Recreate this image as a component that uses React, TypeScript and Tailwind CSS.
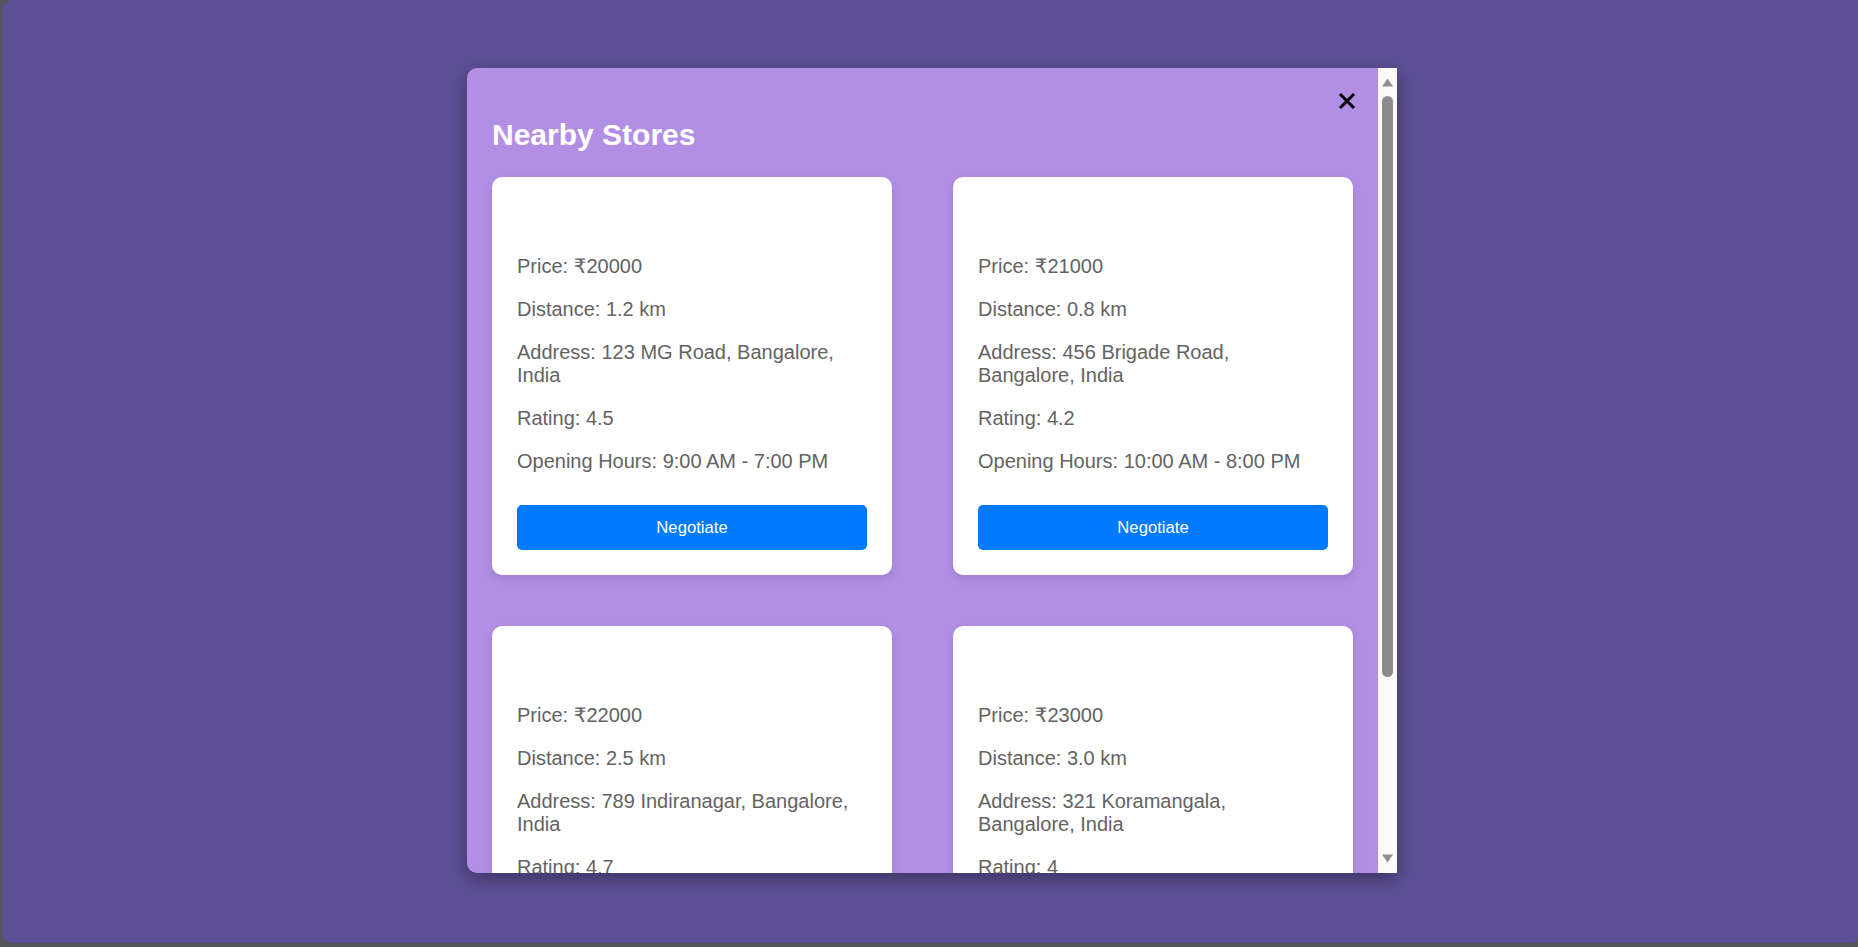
/**
 * Nearby stores modal over a dimmed page
 */
type Store = {
  price: string;
  distance: string;
  address: string;
  rating: string;
  hours: string;
};

const stores: Store[] = [
  { price: '20000', distance: '1.2 km', address: '123 MG Road, Bangalore, India', rating: '4.5', hours: '9:00 AM - 7:00 PM' },
  { price: '21000', distance: '0.8 km', address: '456 Brigade Road, Bangalore, India', rating: '4.2', hours: '10:00 AM - 8:00 PM' },
  { price: '22000', distance: '2.5 km', address: '789 Indiranagar, Bangalore, India', rating: '4.7', hours: '8:00 AM - 6:00 PM' },
  { price: '23000', distance: '3.0 km', address: '321 Koramangala, Bangalore, India', rating: '4', hours: '11:00 AM - 9:00 PM' },
];

const StoreCard = ({ store }: { store: Store }) => (
  <div className="bg-white rounded-[10px] px-[25px] pt-[78px] pb-[25px] shadow-[0_4px_10px_rgba(0,0,0,0.12)] text-[20px] leading-[23px] text-[#636363]">
    <p className="mb-5">Price: ₹{store.price}</p>
    <p className="mb-5">Distance: {store.distance}</p>
    <p className="mb-5">Address: {store.address}</p>
    <p className="mb-5">Rating: {store.rating}</p>
    <p className="mb-5">Opening Hours: {store.hours}</p>
    <button className="mt-[12px] w-full h-[45px] rounded-[5px] bg-[#007bff] text-white text-[16.67px]">
      Negotiate
    </button>
  </div>
);

const ScrollBar = () => (
  <div className="w-[19px] shrink-0 bg-[#fbfbfb] flex flex-col items-center">
    <svg className="mt-[10px]" width="11" height="9" viewBox="0 0 11 9">
      <path d="M5.5 0.5 L11 8.5 L0 8.5 Z" fill="#8f8f8f" />
    </svg>
    <div className="mt-[9px] w-[11px] h-[581px] rounded-full bg-[#8c8c8c]" />
    <div className="flex-1" />
    <svg className="mb-[10px]" width="11" height="9" viewBox="0 0 11 9">
      <path d="M0 0.5 L11 0.5 L5.5 8.5 Z" fill="#8f8f8f" />
    </svg>
  </div>
);

export default function App() {
  return (
    <div
      className="w-full h-[947px] bg-[#555659] pl-[2px] pb-[4px] flex overflow-hidden"
      style={{ fontFamily: '"Liberation Sans", Arial, "DejaVu Sans", sans-serif' }}
    >
      <div className="flex-1 bg-[#5c4f95] rounded-l-[10px] rounded-br-[6px] pl-[4px] pb-[2px] flex items-center justify-center">
        <div className="w-[930px] h-[805px] flex rounded-l-[10px] overflow-hidden shadow-[0_6px_18px_rgba(0,0,0,0.35)]">
          {/* Content */}
          <div className="relative flex-1 bg-[#b28fe5] px-[25px] pt-[50px] overflow-hidden">
            <button className="absolute top-[24px] right-[22px]" aria-label="Close">
              <svg width="18" height="18" viewBox="0 0 18 18">
                <path d="M2 2 L16 16 M16 2 L2 16" stroke="#000" strokeWidth="3" />
              </svg>
            </button>
            <h2 className="text-[30px] leading-[34px] font-bold text-white mb-[25px]">Nearby Stores</h2>
            <div className="grid grid-cols-[400px_400px] gap-x-[61px] gap-y-[51px]">
              {stores.map((s, i) => (
                <StoreCard key={i} store={s} />
              ))}
            </div>
          </div>
          <ScrollBar />
        </div>
      </div>
    </div>
  );
}
